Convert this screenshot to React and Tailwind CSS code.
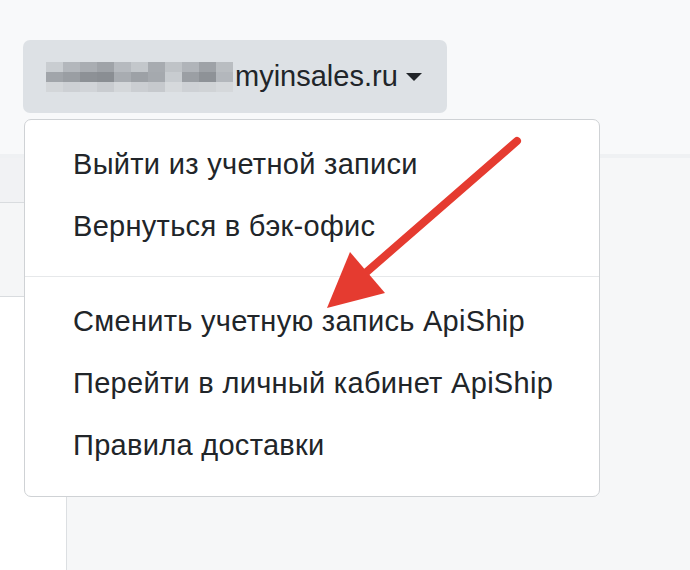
const items = [
  'Выйти из учетной записи',
  'Вернуться в бэк-офис',
  null,
  'Сменить учетную запись ApiShip',
  'Перейти в личный кабинет ApiShip',
  'Правила доставки',
];

// pixelated blur blocks standing in for the hidden part of the login
const blur = [
  ['#c9cdd1', '#b3b7bc', '#a9adb2', '#9fa3a8', '#b6babf', '#c3c7cb', '#a7abb0', '#bfc3c7', '#b0b4b9', '#9ea2a7', '#b9bdc1'],
  ['#a1a5aa', '#9a9ea3', '#8d9196', '#8a8e93', '#a8acb1', '#9da1a6', '#a5a9ae', '#c8ccd0', '#9b9fa4', '#8e9297', '#b3b7bc'],
  ['#d3d6d9', '#cdd0d4', '#d1d4d8', '#c9ccd0', '#d4d7da', '#cbced2', '#c6c9cd', '#d6d9dc', '#ced1d5', '#d0d3d6', '#d5d8db'],
];

function BlurredLogin() {
  return (
    <div className="flex flex-col mr-[2px]">
      {blur.map((row, i) => (
        <div key={i} className="flex">
          {row.map((c, j) => (
            <div key={j} className="w-[17px] h-[10px]" style={{ background: c }} />
          ))}
        </div>
      ))}
    </div>
  );
}

export default function App() {
  return (
    <div
      className="relative w-[690px] h-[570px] overflow-hidden bg-[#f6f7f8] flex flex-col"
      style={{ fontFamily: '"Liberation Sans", Arial, sans-serif' }}
    >
      {/* Top bar */}
      <div className="h-[158px] bg-[#f8f9fa] border-b-4 border-[#eff1f3] px-[23px] pt-[40px] flex-shrink-0">
        <button
          type="button"
          className="h-[73px] w-[424px] rounded-[7px] bg-[#dde1e5] flex items-center pl-[23px] text-[29px] text-[#212529]"
        >
          <BlurredLogin />
          <span>myinsales.ru</span>
          <svg width="16" height="9" viewBox="0 0 16 9" className="ml-[8px] mt-[2px]">
            <polygon points="0,0 16,0 8,8" fill="#212529" />
          </svg>
        </button>
      </div>

      {/* Body */}
      <div className="flex flex-1">
        <div className="w-[67px] flex flex-col border-r border-[#dcdfe2]">
          <div className="h-[45px] bg-[#f1f2f4] border-b border-[#d9dcdf]" />
          <div className="h-[94px] bg-[#f5f6f7] border-b border-[#d9dcdf]" />
          <div className="flex-1 bg-white" />
        </div>
        <div className="flex-1 bg-[#f6f7f8]" />
      </div>

      {/* Dropdown menu */}
      <div className="absolute left-[24px] top-[119px] w-[576px] h-[378px] bg-white border border-[#cfd2d5] rounded-[7px] pt-[14px] flex flex-col">
        {items.map((t, i) =>
          t === null ? (
            <div key={i} className="h-[1px] bg-[#e6e8ea] mt-[18px] mb-[14px]" />
          ) : (
            <div key={i} className="h-[62px] flex items-center pl-[48px] text-[29px] text-[#212529] tracking-[0.3px]">
              {t}
            </div>
          )
        )}
      </div>

      {/* Red arrow annotation */}
      <svg className="absolute left-0 top-0 pointer-events-none" width="690" height="570">
        <line x1="517" y1="141" x2="362" y2="276" stroke="#e53b30" strokeWidth="8" strokeLinecap="round" />
        <polygon points="350,252 385,293 327,308" fill="#e53b30" />
      </svg>
    </div>
  );
}
